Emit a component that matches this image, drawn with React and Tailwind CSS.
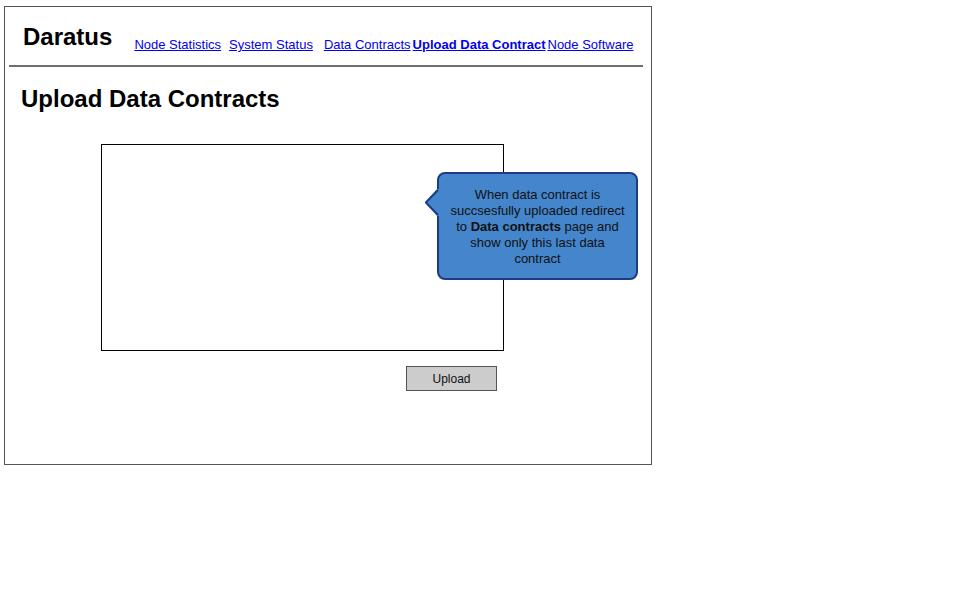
import React from 'react';

const navLinks = [
    { label: 'Node Statistics', cls: 'ml-0' },
    { label: 'System Status', cls: 'ml-[8px]' },
    { label: 'Data Contracts', cls: 'ml-[11px]' },
    { label: 'Upload Data Contract', cls: 'ml-[2px] font-bold' },
    { label: 'Node Software', cls: 'ml-[2px]' },
];

const Callout = () => (
    <div className="absolute left-[432px] top-[165px] w-[201px] h-[108px]">
        <div className="w-full h-full rounded-[8px] border-2 border-[#1f3b86] bg-[#4485cc] pt-[13px] text-center text-[13px] leading-[16px] text-[#111] whitespace-nowrap">
            When data contract is<br />
            succsesfully uploaded redirect<br />
            to <b>Data contracts</b> page and<br />
            show only this last data<br />
            contract
        </div>
        <svg className="absolute left-[-12px] top-[17px]" width="15" height="28" viewBox="0 0 15 28">
            <polygon points="14,0 14,27 12,27 0,13.5 12,0" fill="#4485cc" />
            <polyline points="13,1 0.8,13.5 13,26" fill="none" stroke="#1f3b86" strokeWidth="2" />
        </svg>
    </div>
);

const App = () => {
    return (
        <div className="w-[960px] h-[600px] bg-white font-['Liberation_Sans',Arial,sans-serif]">
            <div className="relative ml-[4px] mt-[6px] w-[648px] h-[459px] border border-[#555]">
                <div className="flex items-start pt-[16px] pl-[18px]">
                    <h1 className="text-[24px] leading-[28px] font-bold text-black">Daratus</h1>
                    <nav className="flex ml-[22px] pt-[14px] text-[13px] leading-[15px]">
                        {navLinks.map(link => (
                            <a key={link.label} href="#" className={`${link.cls} text-[#0000ee] underline`}>
                                {link.label}
                            </a>
                        ))}
                    </nav>
                </div>
                <div className="mt-[13px] ml-[4px] mr-[8px] h-[2px] bg-[#6e6e6e]" />
                <h2 className="mt-[18px] pl-[16px] text-[24px] leading-[28px] font-bold text-black">Upload Data Contracts</h2>
                <textarea className="block mt-[31px] ml-[96px] w-[403px] h-[207px] border border-black resize-none outline-none" />
                <button className="block mt-[15px] ml-[401px] w-[91px] h-[25px] border border-[#555] bg-[#cccccc] text-[12px] text-[#111]">
                    Upload
                </button>
                <Callout />
            </div>
        </div>
    );
};

export default App;
